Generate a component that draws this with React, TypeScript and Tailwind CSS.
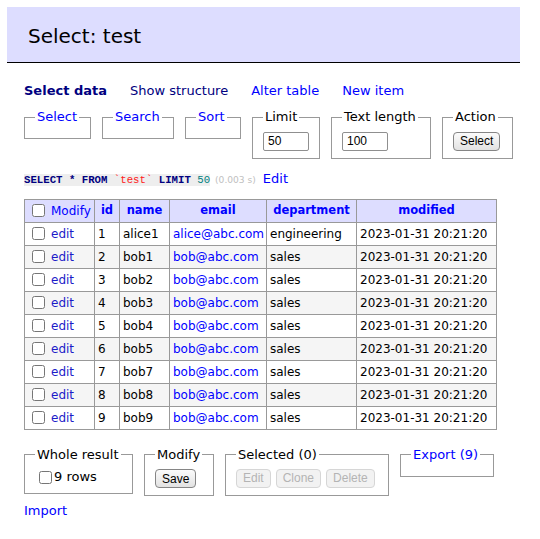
import type { ReactNode } from "react";

const ROWS = [
  { id: 1, name: "alice1", email: "alice@abc.com", dept: "engineering" },
  { id: 2, name: "bob1", email: "bob@abc.com", dept: "sales" },
  { id: 3, name: "bob2", email: "bob@abc.com", dept: "sales" },
  { id: 4, name: "bob3", email: "bob@abc.com", dept: "sales" },
  { id: 5, name: "bob4", email: "bob@abc.com", dept: "sales" },
  { id: 6, name: "bob5", email: "bob@abc.com", dept: "sales" },
  { id: 7, name: "bob7", email: "bob@abc.com", dept: "sales" },
  { id: 8, name: "bob8", email: "bob@abc.com", dept: "sales" },
  { id: 9, name: "bob9", email: "bob@abc.com", dept: "sales" },
];

const MODIFIED = "2023-01-31 20:21:20";

function Box({
  legend,
  link = false,
  className = "",
  children,
}: {
  legend: string;
  link?: boolean;
  className?: string;
  children?: ReactNode;
}) {
  return (
    <fieldset className={`shrink-0 border border-[#999] px-[10px] pt-[6px] pb-[7px] ${className}`}>
      <legend className={`px-[2px] leading-[16px] ${link ? "text-[#0000ff]" : "text-black"}`}>{legend}</legend>
      {children}
    </fieldset>
  );
}

function Btn({ children, disabled = false }: { children: ReactNode; disabled?: boolean }) {
  return disabled ? (
    <button
      disabled
      className="h-[19px] rounded-[4px] border border-[#d6d6d6] bg-[#f2f2f2] px-[6px] font-['Liberation_Sans',sans-serif] text-[12px] leading-none text-[#b4b4b4]"
    >
      {children}
    </button>
  ) : (
    <button className="h-[19px] rounded-[4px] border border-[#858585] bg-linear-to-b from-[#fbfbfb] to-[#e2e2e2] px-[6px] font-['Liberation_Sans',sans-serif] text-[12px] leading-none text-black">
      {children}
    </button>
  );
}

function Num({ value }: { value: string }) {
  return (
    <input
      type="text"
      defaultValue={value}
      className="h-[19px] w-[46px] rounded-[2px] border border-[#8f8f8f] bg-white px-[4px] font-['Liberation_Sans',sans-serif] text-[12px] text-black"
    />
  );
}

function Check({ className = "" }: { className?: string }) {
  return <input type="checkbox" className={`h-[13px] w-[13px] align-middle ${className}`} />;
}

export default function App() {
  return (
    <div className="min-h-[539px] w-[540px] bg-white pt-[7px] font-['DejaVu_Sans',Verdana,sans-serif] text-[13px] text-black">
      {/* title bar */}
      <div className="ml-[7px] mr-[20px] h-[56px] border-b border-black bg-[#ddddff] pl-[21px] pt-[17px]">
        <h2 className="text-[20px] leading-[24px] font-normal">Select: test</h2>
      </div>

      <div className="pl-[24px]">
        {/* menu */}
        <div className="mt-[20px] flex gap-[23px] leading-[16px]">
          <span className="font-bold text-[#000080]">Select data</span>
          <span className="text-[#000080]">Show structure</span>
          <span className="text-[#0000ff]">Alter table</span>
          <span className="text-[#0000ff]">New item</span>
        </div>

        {/* filters */}
        <div className="mt-[10px] flex items-start gap-[11px]">
          <Box legend="Select" link className="w-[67px]" />
          <Box legend="Search" link className="w-[72px]" />
          <Box legend="Sort" link className="w-[56px]" />
          <Box legend="Limit" className="w-[67px]">
            <Num value="50" />
          </Box>
          <Box legend="Text length" className="w-[100px]">
            <Num value="100" />
          </Box>
          <Box legend="Action" className="w-[71px]">
            <Btn>Select</Btn>
          </Box>
        </div>

        {/* query */}
        <div className="mt-[12px] whitespace-nowrap leading-[16px]">
          <code className="bg-[#eeeeee] font-['Liberation_Mono',monospace] text-[10.7px]">
            <b className="text-[#000080]">SELECT</b> <b className="text-[#000080]">*</b>{" "}
            <b className="text-[#000080]">FROM</b> <span className="text-[#ff2020]">`test`</span>{" "}
            <b className="text-[#000080]">LIMIT</b> <span className="text-[#008080]">50</span>
          </code>
          <span className="ml-[5px] text-[9.1px] text-[#c0c0c0]">(0.003 s)</span>
          <span className="ml-[7px] text-[#0000ff]">Edit</span>
        </div>

        {/* data grid */}
        <table className="mt-[11px] w-[472px] table-fixed border-collapse whitespace-nowrap text-[12px]">
          <colgroup>
            <col className="w-[70px]" />
            <col className="w-[25px]" />
            <col className="w-[50px]" />
            <col className="w-[97px]" />
            <col className="w-[90px]" />
            <col className="w-[140px]" />
          </colgroup>
          <thead>
            <tr className="h-[23px] bg-[#ddddff]">
              <td className="border border-[#999] pl-[3px] align-middle text-[#0000ff]">
                <Check className="ml-[4px] mr-[6px]" />
                <span className="align-middle">Modify</span>
              </td>
              {["id", "name", "email", "department", "modified"].map((h) => (
                <th key={h} className="border border-[#999] px-[3px] text-center align-middle text-[11.5px] font-bold text-[#0000ff]">
                  {h}
                </th>
              ))}
            </tr>
          </thead>
          <tbody>
            {ROWS.map((r, i) => (
              <tr key={r.id} className={`h-[23px] ${i % 2 === 1 ? "bg-[#f5f5f5]" : "bg-white"}`}>
                <td className="border border-[#999] pl-[3px] align-middle">
                  <Check className="ml-[4px] mr-[6px]" />
                  <span className="align-middle text-[#1c1cc8]">edit</span>
                </td>
                <td className="border border-[#999] px-[3px] align-middle">{r.id}</td>
                <td className="border border-[#999] px-[3px] align-middle">{r.name}</td>
                <td className="border border-[#999] px-[3px] align-middle text-[#0000ff]">{r.email}</td>
                <td className="border border-[#999] px-[3px] align-middle">{r.dept}</td>
                <td className="border border-[#999] px-[3px] align-middle">{MODIFIED}</td>
              </tr>
            ))}
          </tbody>
        </table>

        {/* bulk actions */}
        <div className="mt-[17px] flex items-start gap-[11px]">
          <Box legend="Whole result" className="w-[109px]">
            <div className="flex h-[17px] items-center">
              <Check className="ml-[4px] mr-[2px]" />
              <span>9 rows</span>
            </div>
          </Box>
          <Box legend="Modify" className="w-[70px]">
            <Btn>Save</Btn>
          </Box>
          <Box legend="Selected (0)" className="w-[164px]">
            <div className="flex gap-[5px]">
              <Btn disabled>Edit</Btn>
              <Btn disabled>Clone</Btn>
              <Btn disabled>Delete</Btn>
            </div>
          </Box>
          <Box legend="Export (9)" link className="w-[94px]" />
        </div>

        <div className="mt-[7px] leading-[16px] text-[#0000ff]">Import</div>
      </div>
    </div>
  );
}
